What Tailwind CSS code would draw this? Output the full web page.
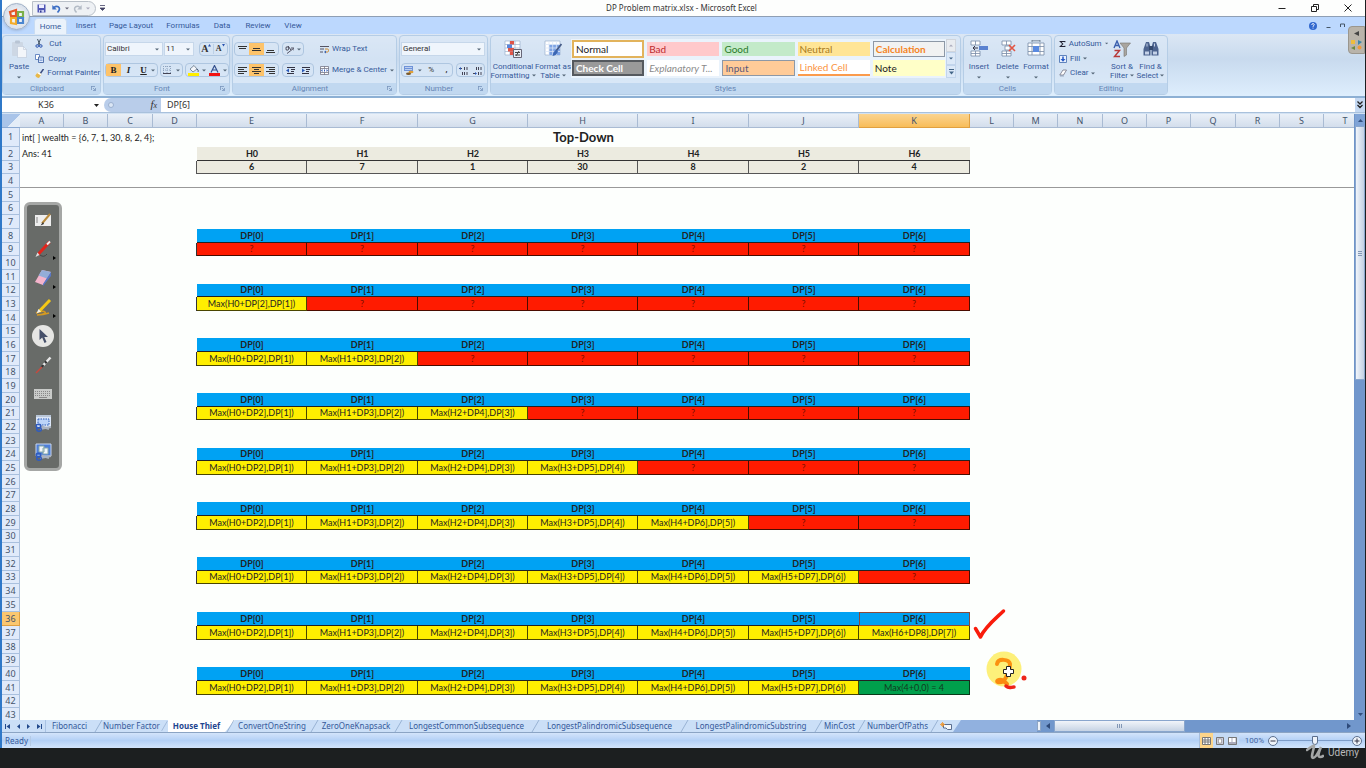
<!DOCTYPE html>
<html lang="en">
<head>
<meta charset="utf-8">
<title>DP Problem matrix.xlsx - Microsoft Excel</title>
<script src="https://cdn.jsdelivr.net/npm/@tailwindcss/browser@4"></script>
</head>
<body class="flex h-screen flex-col overflow-hidden bg-[#1c1f20] font-['Noto_Sans','Open_Sans',sans-serif] text-[8px] leading-[10px] text-[#35599a]">
<div class="relative mr-px flex min-h-0 flex-1 flex-col border-l-2 border-[#2f78c8] bg-[#fdfffd]">

  <!-- Title bar -->
  <header class="flex h-[17px] shrink-0 items-center border-b border-[#8f9fb4] bg-[#fdfefd]">
    <div class="ml-[30px] flex h-[15px] w-[64px] items-center gap-1 rounded-r-full border border-[#b9c0c8] bg-[#eef1f4] pl-1">
      <button aria-label="Save"><svg class="size-[9px]" viewBox="0 0 9 9"><path d="M.5.5h8v8h-8z" fill="#4f55b5"/><path d="M2 .5h5v3.500H2z" fill="#eef"/><path d="M2 6h5v2.500H2z" fill="#c9cdf0"/><path d="M3 6.500h1.500v2H3z" fill="#333a90"/></svg></button>
      <button class="ml-0.5 flex items-center gap-1" aria-label="Undo"><svg class="h-[9px] w-[9px]" viewBox="0 0 9 9"><path d="M2 3.500C5 1 8.500 3 7 6.500L5.500 8.500" fill="none" stroke="#3d6fc4" stroke-width="1.700"/><path d="M.3 1v4.500h4.500z" fill="#3d6fc4"/></svg><svg class="h-[3px] w-1" viewBox="0 0 4 3"><path d="M0 .5h4L2 2.500z" fill="#667"/></svg></button>
      <button class="flex items-center gap-1" aria-label="Redo"><svg class="h-[9px] w-[9px]" viewBox="0 0 9 9"><path d="M7 3.500C4 1 .5 3 2 6.500L3.500 8.500" fill="none" stroke="#b4bcc6" stroke-width="1.500"/><path d="M8.700 1v4.500H4.200z" fill="#b4bcc6"/></svg><svg class="h-[3px] w-1" viewBox="0 0 4 3"><path d="M0 .5h4L2 2.500z" fill="#aab"/></svg></button>
    </div>
    <button class="ml-1" aria-label="Customize toolbar"><svg class="h-[6px] w-[5px]" viewBox="0 0 5 6"><path d="M0 .5h5M0 3h5L2.500 5.500z" fill="#446" stroke="#446" stroke-width=".8"/></svg></button>
    <h1 class="flex-1 pr-[20px] text-center text-[#333]">DP Problem matrix.xlsx - Microsoft Excel</h1>
    <div class="flex items-center gap-[25px] pr-[13px]">
      <button aria-label="Minimize"><svg class="size-[8px]" viewBox="0 0 8 8"><path d="M.5 4.500h7" stroke="#222"/></svg></button>
      <button aria-label="Restore"><svg class="size-[8px]" viewBox="0 0 8 8"><path d="M.5 2.500h5v5h-5zM2.500 2.500v-2h5v5h-2" fill="none" stroke="#222"/></svg></button>
      <button aria-label="Close"><svg class="size-[8px]" viewBox="0 0 8 8"><path d="M.5.5l7 7M7.500.5l-7 7" stroke="#222"/></svg></button>
    </div>
  </header>

  <!-- Ribbon tabs -->
  <nav class="flex h-[17px] shrink-0 items-end bg-[#bcd8fe] pl-[32px] font-['Roboto',sans-serif]" aria-label="Ribbon tabs">
    <button class="h-4 w-[33px] rounded-t border border-b-0 border-[#c9dcf2] bg-[#eaf2fb]">Home</button>
    <button class="h-4 w-[38px]">Insert</button>
    <button class="h-4 w-[52px]">Page Layout</button>
    <button class="h-4 w-[52px]">Formulas</button>
    <button class="h-4 w-[26px]">Data</button>
    <button class="h-4 w-[46px]">Review</button>
    <button class="h-4 w-[24px]">View</button>
    <div class="ml-auto flex h-full items-center gap-[9px] pr-[20px]">
      <button aria-label="Help"><svg class="size-[8px]" viewBox="0 0 8 8"><circle cx="4" cy="4" r="4" fill="#3168cf"/><path d="M2.800 3c0-2 2.600-1.700 2.400-.2C5 3.700 4 3.700 4 4.800M4 5.700v.8" stroke="#fff" fill="none"/></svg></button>
      <button aria-label="Minimize workbook"><svg class="h-[6px] w-[5px]" viewBox="0 0 5 6"><path d="M.5 4.500h4" stroke="#456"/></svg></button>
      <button aria-label="Restore workbook"><svg class="size-[5px]" viewBox="0 0 5 5"><path d="M.5 4V1h4v3" stroke="#456" fill="none"/></svg></button>
    </div>
  </nav>

  <!-- Ribbon -->
  <section class="flex h-[64px] shrink-0 gap-0.5 border-b-2 border-[#8db0d4] bg-linear-to-b from-[#dce7f4] via-[#c8daee] via-40% to-[#deeefd] pt-px pb-px font-['Roboto',sans-serif]">
    <div class="flex w-[99px] flex-col rounded-sm border border-[#b5cde6] bg-[#dbe8f6]/60">
      <div class="flex flex-1 gap-1.5 pl-1.5">
        <button class="flex w-[21px] flex-col items-center pt-1"><svg class="h-[18px] w-4" viewBox="0 0 16 18"><rect x="1" y="2" width="11" height="14" rx="1" fill="#cdd7e4"/><rect x="4" y=".5" width="5" height="3" rx="1" fill="#b8c4d4"/><path d="M6.500 6.500h6l3 3v8h-9z" fill="#f3f6fa" stroke="#bcc8d8" stroke-width=".6"/><path d="M12.500 6.500v3h3" fill="none" stroke="#bcc8d8" stroke-width=".6"/></svg><span class="mt-1">Paste</span><svg class="mt-1 h-[3px] w-1" viewBox="0 0 4 3"><path d="M0 .5h4L2 2.500z" fill="#567"/></svg></button>
        <div class="flex flex-col">
          <button class="flex h-[15px] items-center gap-1.5"><svg class="h-[9px] w-[8px]" viewBox="0 0 8 9"><path d="M2.500 0L5 6M5.500 0L3 6" stroke="#456" fill="none"/><circle cx="2.200" cy="7" r="1.300" fill="none" stroke="#2c55b0"/><circle cx="5.800" cy="7" r="1.300" fill="none" stroke="#2c55b0"/></svg>Cut</button>
          <button class="flex h-[15px] items-center gap-1"><svg class="size-[9px]" viewBox="0 0 9 9"><path d="M.5.5h4v5h-4z" fill="#fff" stroke="#4a72b8" stroke-width=".8"/><path d="M3.500 3h5v5.500h-5z" fill="#dfe9fb" stroke="#34599e" stroke-width=".8"/><path d="M4.500 5h3M4.500 6.500h3" stroke="#5580c8" stroke-width=".6"/></svg>Copy</button>
          <button class="flex h-[14px] items-center gap-[3px] whitespace-nowrap"><svg class="size-[9px]" viewBox="0 0 9 9"><path d="M8.500 0L5 5" stroke="#3a4c80" stroke-width="1.500"/><path d="M3 3l3.500 2L4 9C2 9 1 8 .3 6.500z" fill="#e8b848"/><path d="M3 3l3.500 2-1 1.200L2 4z" fill="#fff"/></svg>Format Painter</button>
        </div>
      </div>
      <div class="flex h-[11px] items-center bg-[#c1d8f0] text-[#6686b5]"><span class="flex-1 text-center">Clipboard</span><svg class="mr-1 size-[5px]" viewBox="0 0 5 5"><path d="M0 .5h4M.5 0v4M2 2l2.500 2.500M4.500 2v2.500H2" stroke="#7a95bd" fill="none" stroke-width=".8"/></svg></div>
    </div>

    <div class="flex w-[127px] flex-col rounded-sm border border-[#b5cde6] bg-[#dbe8f6]/60">
      <div class="flex flex-1 flex-col gap-[7px] pt-1.5 pl-px">
        <div class="flex h-[14px] items-center gap-px text-[#333]">
          <label class="relative flex h-full w-[58px] items-center bg-[#eff5fc]"><select aria-label="Font" class="size-full appearance-none border border-[#c6d7ea] pl-px"><option>Calibri</option></select><svg class="pointer-events-none absolute right-1 h-[3px] w-1" viewBox="0 0 4 3"><path d="M0 .5h4L2 2.500z" fill="#567"/></svg></label>
          <label class="relative flex h-full w-[30px] items-center bg-[#eff5fc]"><select aria-label="Font size" class="size-full appearance-none border border-[#c6d7ea] pl-px"><option>11</option></select><svg class="pointer-events-none absolute right-1 h-[3px] w-1" viewBox="0 0 4 3"><path d="M0 .5h4L2 2.500z" fill="#567"/></svg></label>
          <div class="ml-1 flex h-full w-[29px] items-center rounded-sm border border-[#aec6e0] font-['Liberation_Serif',serif] font-bold">
            <button class="flex w-1/2 justify-center border-r border-[#bcd0e6] text-[10px]" aria-label="Grow font">A<svg class="size-[3px]" viewBox="0 0 3 3"><path d="M0 2.500h3L1.500 0z" fill="#2a55b0"/></svg></button>
            <button class="flex w-1/2 justify-center text-[8px]" aria-label="Shrink font">A<svg class="size-[3px]" viewBox="0 0 3 3"><path d="M0 0h3L1.500 2.500z" fill="#2a55b0"/></svg></button>
          </div>
        </div>
        <div class="flex h-[14px] gap-0.5 font-['Liberation_Serif',serif] text-[9px] font-bold text-[#222]">
          <div class="flex w-[53px] items-center rounded-sm border border-[#aec6e0]">
            <button class="h-full w-[15px] bg-[#fdc36a]">B</button><button class="h-full w-[15px] italic">I</button><button class="h-full w-[15px] underline">U</button><svg class="h-[3px] w-1" viewBox="0 0 4 3"><path d="M0 .5h4L2 2.500z" fill="#567"/></svg>
          </div>
          <button class="flex w-[23px] items-center justify-around rounded-sm border border-[#aec6e0]" aria-label="Borders"><svg class="size-[8px]" viewBox="0 0 8 8"><path d="M.5 0v8M4 0v8M7.500 0v8M0 .5h8M0 4h8" stroke="#8ea3be" stroke-dasharray="1 1"/><path d="M0 7.500h8" stroke="#445"/></svg><svg class="h-[3px] w-1" viewBox="0 0 4 3"><path d="M0 .5h4L2 2.500z" fill="#567"/></svg></button>
          <div class="flex w-[44px] items-center justify-around rounded-sm border border-[#aec6e0]">
            <button aria-label="Fill color"><svg class="h-[11px] w-[11px]" viewBox="0 0 11 11"><path d="M2 4l4-3.500L9 4 5 7z" fill="#f5f7fb" stroke="#567" stroke-width=".7"/><path d="M9 4c2 1 1 3 1 3" stroke="#457" fill="none"/><path d="M0 8h11v3H0z" fill="#ffee00"/></svg></button><svg class="h-[3px] w-1" viewBox="0 0 4 3"><path d="M0 .5h4L2 2.500z" fill="#567"/></svg>
            <button aria-label="Font color"><svg class="h-[11px] w-[11px]" viewBox="0 0 11 11"><path d="M2 7.500L5.500.5 9 7.500M3.500 5h4" stroke="#34508e" stroke-width="1.200" fill="none"/><path d="M0 8h11v3H0z" fill="#f21313"/></svg></button><svg class="h-[3px] w-1" viewBox="0 0 4 3"><path d="M0 .5h4L2 2.500z" fill="#567"/></svg>
          </div>
        </div>
      </div>
      <div class="flex h-[11px] items-center bg-[#c1d8f0] text-[#6686b5]"><span class="flex-1 text-center">Font</span><svg class="mr-1 size-[5px]" viewBox="0 0 5 5"><path d="M0 .5h4M.5 0v4M2 2l2.500 2.500M4.500 2v2.500H2" stroke="#7a95bd" fill="none" stroke-width=".8"/></svg></div>
    </div>

    <div class="flex w-[165px] flex-col rounded-sm border border-[#b5cde6] bg-[#dbe8f6]/60">
      <div class="flex flex-1 flex-col gap-[7px] pt-1.5 pl-px">
        <div class="flex h-[14px] items-center">
          <div class="flex h-full w-[45px] items-center rounded-sm border border-[#aec6e0]">
            <button class="flex h-full flex-1 items-center justify-center" aria-label="Top align"><svg class="size-[9px]" viewBox="0 0 9 9"><path d="M0 1.500h9M1 3.500h7" stroke="#333"/></svg></button>
            <button class="flex h-full flex-1 items-center justify-center bg-[#fdc36a]" aria-label="Middle align"><svg class="size-[9px]" viewBox="0 0 9 9"><path d="M1 3.500h7M0 5.500h9" stroke="#333"/></svg></button>
            <button class="flex h-full flex-1 items-center justify-center" aria-label="Bottom align"><svg class="size-[9px]" viewBox="0 0 9 9"><path d="M1 5.500h7M0 7.500h9" stroke="#333"/></svg></button>
          </div>
          <button class="ml-[3px] flex h-full w-[22px] items-center justify-around rounded-sm border border-[#aec6e0]" aria-label="Orientation"><svg class="size-[9px]" viewBox="0 0 9 9"><path d="M2 8.500l6.500-5M6 3h3v2.500" stroke="#556" fill="none"/><path d="M1 3.500a1.300 1.300 0 1 0 2.500 0a1.300 1.300 0 1 0-2.500 0M3 1l3 4" stroke="#445" fill="none"/></svg><svg class="h-[3px] w-1" viewBox="0 0 4 3"><path d="M0 .5h4L2 2.500z" fill="#567"/></svg></button>
          <button class="ml-4 flex items-center gap-[3px] whitespace-nowrap"><svg class="size-[9px]" viewBox="0 0 9 9"><path d="M0 1.500h9M0 4h4M0 7h3" stroke="#556"/><path d="M5 4h2.500q1 0 1 1.500T7.500 7H5" stroke="#d08a2c" fill="none"/><path d="M6 5.500L4 7l2 1.500z" fill="#3a62b0"/></svg>Wrap Text</button>
        </div>
        <div class="flex h-[14px] items-center">
          <div class="flex h-full w-[45px] items-center rounded-sm border border-[#aec6e0]">
            <button class="flex h-full flex-1 items-center justify-center" aria-label="Align left"><svg class="size-[9px]" viewBox="0 0 9 9"><path d="M0 1.500h9M0 3.500h6M0 5.500h9M0 7.500h6" stroke="#333"/></svg></button>
            <button class="flex h-full flex-1 items-center justify-center bg-[#fdc36a]" aria-label="Center"><svg class="size-[9px]" viewBox="0 0 9 9"><path d="M0 1.500h9M2 3.500h5M0 5.500h9M2 7.500h5" stroke="#333"/></svg></button>
            <button class="flex h-full flex-1 items-center justify-center" aria-label="Align right"><svg class="size-[9px]" viewBox="0 0 9 9"><path d="M0 1.500h9M3 3.500h6M0 5.500h9M3 7.500h6" stroke="#333"/></svg></button>
          </div>
          <div class="ml-[3px] flex h-full w-[32px] items-center justify-around rounded-sm border border-[#aec6e0]">
            <button aria-label="Decrease indent"><svg class="size-[9px]" viewBox="0 0 9 9"><path d="M1 1.500h8M5 3.500h4M5 5.500h3M1 7.500h7" stroke="#334"/><path d="M0 4.500L3 2.500v4z" fill="#2c5ab8"/></svg></button>
            <button aria-label="Increase indent"><svg class="size-[9px]" viewBox="0 0 9 9"><path d="M1 1.500h8M5 3.500h4M5 5.500h3M1 7.500h7" stroke="#334"/><path d="M4 4.500L1 2.500v4z" fill="#2c5ab8"/></svg></button>
          </div>
          <button class="ml-1.5 flex items-center gap-[3px] whitespace-nowrap"><svg class="size-[9px]" viewBox="0 0 9 9"><path d="M.5.5h8v8h-8zM.5 2.500h8M.5 6.500h8M4.500.5v2M4.500 6.500v2" stroke="#667" stroke-width=".7" fill="#fff"/><path d="M1 4.500l1.500-1.500v3zM8 4.500L6.500 3v3zM4 3.500h1v2H4z" fill="#2c5ab8"/></svg>Merge &amp; Center<svg class="h-[3px] w-1" viewBox="0 0 4 3"><path d="M0 .5h4L2 2.500z" fill="#567"/></svg></button>
        </div>
      </div>
      <div class="flex h-[11px] items-center bg-[#c1d8f0] text-[#6686b5]"><span class="flex-1 text-center">Alignment</span><svg class="mr-1 size-[5px]" viewBox="0 0 5 5"><path d="M0 .5h4M.5 0v4M2 2l2.500 2.500M4.500 2v2.500H2" stroke="#7a95bd" fill="none" stroke-width=".8"/></svg></div>
    </div>

    <div class="flex w-[89px] flex-col rounded-sm border border-[#b5cde6] bg-[#dbe8f6]/60">
      <div class="flex flex-1 flex-col gap-[7px] pt-1.5 pl-px">
        <label class="relative flex h-[14px] w-[84px] items-center bg-[#eff5fc] text-[#333]"><select aria-label="Number format" class="size-full appearance-none border border-[#c6d7ea] pl-px"><option>General</option></select><svg class="pointer-events-none absolute right-1 h-[3px] w-1" viewBox="0 0 4 3"><path d="M0 .5h4L2 2.500z" fill="#567"/></svg></label>
        <div class="flex h-[14px] gap-[3px] text-[#333]">
          <div class="flex w-[52px] items-center gap-1 rounded-sm border border-[#aec6e0] pl-0.5">
            <button aria-label="Accounting format"><svg class="size-[10px]" viewBox="0 0 10 10"><rect y="1" width="9" height="5" fill="#6f93d8"/><path d="M1 2.500h7M1 4.500h7" stroke="#dfe9fb" stroke-width=".7"/><ellipse cx="7" cy="7" rx="2.500" ry="1.200" fill="#e0a13a"/><ellipse cx="4.500" cy="8.700" rx="2.500" ry="1.200" fill="#7c5a2c"/></svg></button>
            <svg class="h-[3px] w-1" viewBox="0 0 4 3"><path d="M0 .5h4L2 2.500z" fill="#567"/></svg>
            <button class="w-3">%</button><button class="w-3 font-bold">,</button>
          </div>
          <div class="flex w-[29px] items-center justify-around rounded-sm border border-[#aec6e0]">
            <button aria-label="Increase decimal"><svg class="size-[9px]" viewBox="0 0 9 9"><path d="M0 2.500h3M5.500 1v3M8 1v3M3.500 6v3M5.500 6v3M8 6v3" stroke="#445"/><path d="M0 2.500L2 1v3z" fill="#2c5ab8"/></svg></button>
            <button aria-label="Decrease decimal"><svg class="size-[9px]" viewBox="0 0 9 9"><path d="M0 7.500h3M5.500 1v3M8 1v3M3.500 1v3M5.500 6v3M8 6v3" stroke="#445"/><path d="M4 7.500L2 6v3z" fill="#2c5ab8"/></svg></button>
          </div>
        </div>
      </div>
      <div class="flex h-[11px] items-center bg-[#c1d8f0] text-[#6686b5]"><span class="flex-1 text-center">Number</span><svg class="mr-1 size-[5px]" viewBox="0 0 5 5"><path d="M0 .5h4M.5 0v4M2 2l2.500 2.500M4.500 2v2.500H2" stroke="#7a95bd" fill="none" stroke-width=".8"/></svg></div>
    </div>

    <div class="flex w-[471px] flex-col rounded-sm border border-[#b5cde6] bg-[#dbe8f6]/60">
      <div class="flex min-h-0 flex-1">
        <button class="flex w-[44px] flex-col items-center pt-1"><svg class="size-[18px]" viewBox="0 0 18 18"><path d="M1 1h15v14H1z" fill="#fff" stroke="#9cb0cc" stroke-width=".7"/><path d="M1 4.500h15M1 8h15M1 11.500h15M6 1v14M11 1v14" stroke="#9cb0cc" stroke-width=".7"/><path d="M6 1h4v3.500H6zM4 8h6v3.500H4z" fill="#e05548"/><path d="M3 4.500h5V8H3z" fill="#5b84d8"/><path d="M6 11.500h3V15H6z" fill="#e05548"/><path d="M9.500 9.500h8v8h-8z" fill="#e9eef6" stroke="#667"/><path d="M11 12.500h5M11 15h5M15 11l-3 5" stroke="#444"/></svg><span class="mt-1 leading-[9px] whitespace-nowrap">Conditional<br>Formatting<svg class="ml-0.5 inline h-[3px] w-1" viewBox="0 0 4 3"><path d="M0 .5h4L2 2.500z" fill="#567"/></svg></span></button>
        <button class="flex w-[36px] flex-col items-center pt-1"><svg class="size-[18px]" viewBox="0 0 18 18"><path d="M1 1h15v14H1z" fill="#fff" stroke="#9cb0cc" stroke-width=".7"/><path d="M5 4.500h11V15H5z" fill="#7fa4e4"/><path d="M1 4.500h15M1 8h15M1 11.500h15M5 1v14M8.700 1v14M12.400 1v14" stroke="#dbe6f6" stroke-width=".8"/><path d="M17.500 4L12 11" stroke="#445a86" stroke-width="1.800"/><path d="M12.500 10q-3 .5-4 6 4-.5 5.500-4.500z" fill="#3b66b4"/></svg><span class="mt-1 leading-[9px] whitespace-nowrap">Format as<br>Table<svg class="ml-0.5 inline h-[3px] w-1" viewBox="0 0 4 3"><path d="M0 .5h4L2 2.500z" fill="#567"/></svg></span></button>
        <div class="mt-[3px] grid h-[39px] w-[375px] grid-cols-5 grid-rows-2 gap-x-[3px] gap-y-px bg-[#eaf3fc] p-px font-['Lato',sans-serif] text-[10px] leading-[12px]">
          <button class="border-2 border-[#e2b35c] bg-white pl-0.5 text-left text-[#222]">Normal</button>
          <button class="my-0.5 bg-[#ffc9cb] pl-0.5 text-left text-[#bb2a2c]">Bad</button>
          <button class="my-0.5 bg-[#c3eac9] pl-0.5 text-left text-[#2a7a2a]">Good</button>
          <button class="my-0.5 bg-[#ffe596] pl-0.5 text-left text-[#a87a1c]">Neutral</button>
          <button class="my-px border border-[#8d98a6] bg-[#f1f2f2] pl-0.5 text-left font-bold text-[#f5841f]">Calculation</button>
          <button class="my-px border-2 border-double border-[#55595e] bg-[#9a9a9a] pl-0.5 text-left font-bold text-white">Check Cell</button>
          <button class="my-px bg-white pl-0.5 text-left whitespace-nowrap text-[#8a8a8a] italic">Explanatory T...</button>
          <button class="my-px border border-[#8d98a6] bg-[#ffcb98] pl-0.5 text-left text-[#5a5878]">Input</button>
          <button class="my-px border-b-2 border-[#fb9b4c] bg-white pl-0.5 text-left text-[#fb9440]">Linked Cell</button>
          <button class="my-px bg-[#ffffc8] pl-0.5 text-left text-[#222]">Note</button>
        </div>
        <div class="mt-[3px] flex h-[39px] w-[10px] flex-col">
          <button class="flex flex-1 items-center justify-center border border-[#d0d5dc] bg-[#e9ecf0]" aria-label="Previous styles"><svg class="h-[3px] w-1" viewBox="0 0 4 3"><path d="M0 2.500h4L2 .5z" fill="#aab"/></svg></button>
          <button class="flex flex-1 items-center justify-center border border-[#c2d5ec] bg-[#dce9f8]" aria-label="Next styles"><svg class="h-[3px] w-1" viewBox="0 0 4 3"><path d="M0 .5h4L2 2.500z" fill="#468"/></svg></button>
          <button class="flex flex-1 items-center justify-center border border-[#c2d5ec] bg-[#dce9f8]" aria-label="More styles"><svg class="h-[6px] w-[5px]" viewBox="0 0 5 6"><path d="M0 .5h5" stroke="#468"/><path d="M0 2.500h5L2.500 5.500z" fill="#468"/></svg></button>
        </div>
      </div>
      <div class="flex h-[11px] items-center justify-center bg-[#c1d8f0] text-[#6686b5]">Styles</div>
    </div>

    <div class="flex w-[89px] flex-col rounded-sm border border-[#b5cde6] bg-[#dbe8f6]/60">
      <div class="flex flex-1 pl-px">
        <button class="flex w-[28px] flex-col items-center pt-1"><svg class="size-[18px]" viewBox="0 0 18 18"><path d="M1 1h9v4H1zM1 11h9v5H1z" fill="#fff" stroke="#778aa6" stroke-width=".8"/><path d="M5.500 1v4M5.500 11v5M1 13.500h9" stroke="#778aa6" stroke-width=".8"/><path d="M9 6h9v4H9z" fill="#5a82d0"/><path d="M8 8H3M5 6L3 8l2 2" stroke="#334" fill="none"/></svg><span class="mt-1">Insert</span><svg class="mt-1 h-[3px] w-1" viewBox="0 0 4 3"><path d="M0 .5h4L2 2.500z" fill="#567"/></svg></button>
        <button class="flex w-[29px] flex-col items-center pt-1"><svg class="size-[18px]" viewBox="0 0 18 18"><path d="M3 1h9v4H3zM3 11h9v5H3zM6 6h5v4H6z" fill="#fff" stroke="#778aa6" stroke-width=".8"/><path d="M7.500 1v4M7.500 11v5M3 13.500h9" stroke="#778aa6" stroke-width=".8"/><path d="M10 5l6 6M16 5l-6 6" stroke="#e25544" stroke-width="1.600"/></svg><span class="mt-1">Delete</span><svg class="mt-1 h-[3px] w-1" viewBox="0 0 4 3"><path d="M0 .5h4L2 2.500z" fill="#567"/></svg></button>
        <button class="flex w-[28px] flex-col items-center pt-1"><svg class="size-[18px]" viewBox="0 0 18 18"><path d="M1 3h16v12H1z" fill="#fff" stroke="#778aa6" stroke-width=".8"/><path d="M1 6.500h16M1 11.500h16M5 3v12M13 3v12" stroke="#778aa6" stroke-width=".8"/><path d="M6 6h6v6H6z" fill="#5a8ae0"/><path d="M5 .8h8M5 0v2M13 0v2" stroke="#567" stroke-width=".7"/></svg><span class="mt-1">Format</span><svg class="mt-1 h-[3px] w-1" viewBox="0 0 4 3"><path d="M0 .5h4L2 2.500z" fill="#567"/></svg></button>
      </div>
      <div class="flex h-[11px] items-center justify-center bg-[#c1d8f0] text-[#6686b5]">Cells</div>
    </div>

    <div class="flex w-[114px] flex-col rounded-sm border border-[#b5cde6] bg-[#dbe8f6]/60">
      <div class="flex flex-1 pl-1">
        <div class="flex w-[49px] flex-col whitespace-nowrap">
          <button class="flex h-[15px] items-center gap-[3px]"><svg class="size-[8px]" viewBox="0 0 8 8"><path d="M7 2V1H1.500L4.500 4 1.500 7H7V6" stroke="#223" stroke-width="1.200" fill="none"/></svg>AutoSum<svg class="h-[3px] w-1" viewBox="0 0 4 3"><path d="M0 .5h4L2 2.500z" fill="#567"/></svg></button>
          <button class="flex h-[15px] items-center gap-[3px]"><svg class="size-[8px]" viewBox="0 0 8 8"><path d="M.5.5h7v7h-7z" fill="#e8f0fc" stroke="#5f83bd"/><path d="M4 1.500v3" stroke="#2358c8" stroke-width="1.500"/><path d="M1.500 4h5L4 6.800z" fill="#2358c8"/></svg>Fill<svg class="h-[3px] w-1" viewBox="0 0 4 3"><path d="M0 .5h4L2 2.500z" fill="#567"/></svg></button>
          <button class="flex h-[14px] items-center gap-[3px]"><svg class="size-[8px]" viewBox="0 0 8 8"><path d="M4 1h3.500L4.500 6H.8z" fill="#fff" stroke="#667" stroke-width=".7"/><path d="M.8 6h3.700l.5 1.500H1z" fill="#9aa8bd"/></svg>Clear<svg class="h-[3px] w-1" viewBox="0 0 4 3"><path d="M0 .5h4L2 2.500z" fill="#567"/></svg></button>
        </div>
        <button class="flex w-[28px] flex-col items-center pt-1"><svg class="size-[18px]" viewBox="0 0 18 18"><path d="M1 8L4 1l3 7M2.200 5.500h3.600" stroke="#3b5fae" stroke-width="1.400" fill="none"/><path d="M1.500 10.500H6.500L1.500 16.500H7" stroke="#b83a3a" stroke-width="1.500" fill="none"/><path d="M7 3h10.500l-4 5v7l-2.500 1.500V8z" fill="#a9a59f" stroke="#76736e" stroke-width=".6"/></svg><span class="mt-1 leading-[9px] whitespace-nowrap">Sort &amp;<br>Filter<svg class="ml-0.5 inline h-[3px] w-1" viewBox="0 0 4 3"><path d="M0 .5h4L2 2.500z" fill="#567"/></svg></span></button>
        <button class="flex w-[29px] flex-col items-center pt-1"><svg class="size-[18px]" viewBox="0 0 18 18"><path d="M4 2h3l1.500 5v8.500H1.500V9zM14 2h-3L9.500 7v8.500h7V9z" fill="#4d648f"/><path d="M7 6h4v4H7z" fill="#34496e"/><path d="M3 11.500h4v3H3zM11 11.500h4v3h-4zM4.500 3.500h1v3h-1zM12 3.500h1v3h-1z" fill="#c5d2e8"/></svg><span class="mt-1 leading-[9px] whitespace-nowrap">Find &amp;<br>Select<svg class="ml-0.5 inline h-[3px] w-1" viewBox="0 0 4 3"><path d="M0 .5h4L2 2.500z" fill="#567"/></svg></span></button>
      </div>
      <div class="flex h-[11px] items-center justify-center bg-[#c1d8f0] text-[#6686b5]">Editing</div>
    </div>
  </section>

  <!-- Formula bar -->
  <div class="flex h-[15px] shrink-0 items-stretch border-b border-[#a9c1dc] bg-white text-[9px] text-[#333]">
    <div class="flex w-[102px] items-center"><input aria-label="Name box" value="K36" class="min-w-0 flex-1 pr-1 text-center"><svg class="mr-[5px] h-[3px] w-[5px]" viewBox="0 0 5 3"><path d="M0 0h5L2.500 3z" fill="#222"/></svg></div>
    <div class="flex w-[57px] items-center justify-between rounded-l-full bg-[#b9cdea] pr-1 pl-1"><span class="size-[6px] rounded-full border border-[#9bb0cf] bg-[#dbe6f5]"></span><button class="font-['Liberation_Serif',serif] text-[11px] italic" aria-label="Insert function">f<span class="text-[8px]">x</span></button></div>
    <input aria-label="Formula" value="DP[6]" class="min-w-0 flex-1 pl-1.5">
    <button class="flex w-[10px] items-center justify-center bg-[#c4d8f2]" aria-label="Expand formula bar"><svg class="h-[8px] w-[6px]" viewBox="0 0 6 8"><path d="M.5.5L3 3 5.500.5M.5 4L3 6.500 5.500 4" stroke="#222" stroke-width="1.300" fill="none"/></svg></button>
  </div>

  <!-- Worksheet -->
  <main class="relative flex min-h-0 flex-1 border-t border-[#d3e2f3]">
    <div class="min-w-0 flex-1 overflow-hidden">
      <table class="w-full table-fixed border-separate border-spacing-0 font-['Lato',sans-serif] text-[9px] leading-[12px] text-[#222]">
        <colgroup id="cols"></colgroup>
        <thead><tr id="letters" class="h-[14px]"></tr></thead>
        <tbody id="rows"></tbody>
      </table>
    </div>
    <div class="flex w-[11px] flex-col border-l border-[#6f95c9] bg-[#7197cc]" role="scrollbar" aria-controls="rows" aria-valuenow="0" aria-label="Vertical scroll">
      <span class="flex h-[12px] items-center justify-center bg-[#7fa3d6]"><svg class="h-[3px] w-[5px]" viewBox="0 0 5 3"><path d="M0 3h5L2.500 0z" fill="#33507e"/></svg></span>
      <span class="flex h-[254px] items-center justify-center border border-[#89a6cd] bg-linear-to-r from-[#f1f5fa] to-[#c3d1e4]"><svg class="h-[5px] w-[4px]" viewBox="0 0 4 5"><path d="M0 .5h4M0 2.500h4M0 4.500h4" stroke="#8297b5"/></svg></span>
      <span class="mt-auto flex h-[12px] items-center justify-center"><svg class="h-[3px] w-[5px]" viewBox="0 0 5 3"><path d="M0 0h5L2.500 3z" fill="#33507e"/></svg></span>
    </div>

    <!-- Pen strokes drawn over the sheet -->
    <svg class="absolute top-[491px] left-[965px] h-[90px] w-[70px]" viewBox="0 0 70 90" aria-hidden="true">
      <circle cx="37" cy="64" r="17.500" fill="#fdf07a"/>
      <path d="M8.500 23.500l5 8.500C18 22 27 15 36.500 6" fill="none" stroke="#f91c0c" stroke-width="3.500" stroke-linecap="round" stroke-linejoin="round"/>
      <path d="M30 59c1-6 12-5 13 0 0 6-1 9-5 15" fill="none" stroke="#fb9110" stroke-width="4" stroke-linecap="round"/>
      <path d="M37 76c-6 3-9 0-5-1 4-1 6 2 8 4" fill="none" stroke="#fb8a10" stroke-width="4" stroke-linecap="round"/>
      <path d="M39 81c3 3 5 1 8 1" fill="none" stroke="#ee2418" stroke-width="3.500" stroke-linecap="round"/>
      <circle cx="57" cy="73" r="2.500" fill="#ee2418"/>
      <path d="M39.500 61.500h4v3h3v4h-3v3h-4v-3h-3v-4h3z" fill="#fff" stroke="#222"/>
    </svg>

    <!-- Annotation palette -->
    <aside class="absolute top-[88px] left-[22px] flex h-[269px] w-[38px] flex-col items-center gap-[7px] rounded-md border-[3px] border-[#a5a7a5] bg-[#686b68] pt-1" aria-label="Drawing tools">
      <button class="flex size-[22px] items-center justify-center" aria-label="Whiteboard"><svg class="size-[18px]" viewBox="0 0 18 18"><rect x="1" y="4" width="16" height="11" fill="#eee"/><path d="M3 6v6" stroke="#888"/><path d="M16 3L8 12.500" stroke="#b98a3c" stroke-width="2"/><path d="M9 11l-2.500 3.500L10 13z" fill="#333"/></svg></button>
      <button class="relative flex size-[22px] items-center justify-center" aria-label="Pen"><svg class="size-[18px]" viewBox="0 0 18 18"><path d="M6 15q4 3 7-1" stroke="#444" fill="none"/><path d="M15.500 2L4 14.500" stroke="#e3241b" stroke-width="3"/><path d="M16 1.500l-3 3" stroke="#eee" stroke-width="2"/><path d="M3.500 12.500L1.500 17l4-2z" fill="#ddd"/></svg><svg class="absolute -right-0.5 bottom-0 h-1 w-[3px]" viewBox="0 0 3 4"><path d="M0 0v4l3-2z"/></svg></button>
      <button class="relative flex size-[22px] items-center justify-center" aria-label="Eraser"><svg class="size-[18px]" viewBox="0 0 18 18"><path d="M8 1l9 2-8 13-8-3z" fill="#f5b4cc"/><path d="M8 1l9 2-4 6.500-8.500-3z" fill="#93add8"/><path d="M17 3v4l-8 10v-2z" fill="#5877c8"/></svg><svg class="absolute -right-0.5 bottom-0 h-1 w-[3px]" viewBox="0 0 3 4"><path d="M0 0v4l3-2z"/></svg></button>
      <button class="relative flex size-[22px] items-center justify-center" aria-label="Highlighter"><svg class="size-[18px]" viewBox="0 0 18 18"><path d="M2 15q7-3 9-1t-8 3q6 0 12-2" stroke="#d69a20" fill="none" stroke-width="1.500"/><path d="M16 2L5 13.500" stroke="#f6c915" stroke-width="3"/><path d="M4.500 11l-2 4.500L7 13.500z" fill="#eee"/></svg><svg class="absolute -right-0.5 bottom-0 h-1 w-[3px]" viewBox="0 0 3 4"><path d="M0 0v4l3-2z"/></svg></button>
      <button class="flex size-[22px] items-center justify-center rounded-full bg-[#e6e6e4]" aria-label="Pointer"><svg class="size-4" viewBox="0 0 16 16"><path d="M4.500 1v11l2.700-2.500 2.300 5.500 2-1-2.200-5H13z" fill="#46506a"/></svg></button>
      <button class="flex size-[22px] items-center justify-center" aria-label="Laser"><svg class="size-[18px]" viewBox="0 0 18 18"><path d="M16.500 1.500L9 9.500" stroke="#e8e8e8" stroke-width="2.500"/><path d="M12.500 5.500L11 7" stroke="#333" stroke-width="2.500"/><path d="M9.500 9L7.500 11" stroke="#333" stroke-width="2"/><path d="M8 11l-6 6" stroke="#c8483c" stroke-width="1.500"/></svg></button>
      <button class="flex size-[22px] items-center justify-center" aria-label="Keyboard"><svg class="h-[10px] w-[18px]" viewBox="0 0 18 10"><path d="M0 0h18v10H0z" fill="#c9cbc9"/><path d="M1 2.500h16M1 4.500h16M1 6.500h16" stroke="#888" stroke-dasharray="1 1"/><path d="M5 8.500h8" stroke="#888"/></svg></button>
      <button class="flex size-[22px] items-center justify-center" aria-label="Capture region"><svg class="size-[18px]" viewBox="0 0 18 18"><path d="M2 1h15v12H2z" fill="#dbe6f7"/><path d="M2 1h15v2H2z" fill="#b9c6d8"/><path d="M4 5h11v6H4z" fill="#bcd4f8" stroke="#2c5cb8" stroke-dasharray="1.500 1"/><path d="M6 12l9 3M6 15l11-2" stroke="#a9b2c0" stroke-width="2"/><ellipse cx="4.500" cy="12" rx="2.300" ry="1.700" fill="none" stroke="#2f5cc0" stroke-width="1.500"/><ellipse cx="5" cy="15.500" rx="2.300" ry="1.700" fill="none" stroke="#2f5cc0" stroke-width="1.500"/></svg></button>
      <button class="flex size-[22px] items-center justify-center" aria-label="Capture screen"><svg class="size-[18px]" viewBox="0 0 18 18"><path d="M2 1h15v12H2z" fill="#4f7fd8" stroke="#c7d6ee"/><path d="M5 3h5v6H5zM9 5h5v6H9z" fill="#f1f5fb" stroke="#8aa"/><path d="M6 12l9 3M6 15l11-2" stroke="#a9b2c0" stroke-width="2"/><ellipse cx="4.500" cy="12" rx="2.300" ry="1.700" fill="none" stroke="#2f5cc0" stroke-width="1.500"/><ellipse cx="5" cy="15.500" rx="2.300" ry="1.700" fill="none" stroke="#2f5cc0" stroke-width="1.500"/></svg></button>
    </aside>
  </main>

  <!-- Sheet tabs -->
  <div class="flex h-[13px] shrink-0 items-stretch border-b border-[#8ba4c4] bg-[#91b1df]">
    <div class="flex w-[43px] items-center justify-around bg-[#cbdff7]">
      <button aria-label="First sheet"><svg class="size-[5px]" viewBox="0 0 5 5"><path d="M0 0h1v5H0zM5 0v5L1.500 2.500z" fill="#234a8c"/></svg></button>
      <button aria-label="Previous sheet"><svg class="size-[5px]" viewBox="0 0 5 5"><path d="M4 0v5L1 2.500z" fill="#234a8c"/></svg></button>
      <button aria-label="Next sheet"><svg class="size-[5px]" viewBox="0 0 5 5"><path d="M1 0v5l3-2.500z" fill="#234a8c"/></svg></button>
      <button aria-label="Last sheet"><svg class="size-[5px]" viewBox="0 0 5 5"><path d="M4 0h1v5H4zM0 0v5l3.500-2.500z" fill="#234a8c"/></svg></button>
    </div>
    <nav id="tabs" class="flex border-l border-[#a9c2e2] bg-[#cbdff7]" aria-label="Sheets"></nav>
    <button class="flex items-center bg-[#cbdff7]" aria-label="Insert sheet"><svg class="h-[9px] w-[14px]" viewBox="0 0 14 9"><path d="M4.500 2.500h8v5h-4l-1.500-1.500h-2.500z" fill="#f5f8fc" stroke="#5a6f90"/><path d="M3.500 0v5M1 2.500h5M2 1l3 3M5 1L2 4" stroke="#f0962c" stroke-width=".8"/></svg><svg class="h-3 w-[8px]" viewBox="0 0 8 12"><path d="M0 12L8 0v12z" fill="#91b1df"/></svg></button>
    <div class="ml-auto flex w-[328px] items-stretch bg-[#7197cc]" role="scrollbar" aria-controls="rows" aria-valuenow="0" aria-orientation="horizontal" aria-label="Horizontal scroll">
      <span class="my-px w-1 border border-[#8ea5c4] bg-[#eef3fa]"></span>
      <span class="flex w-[13px] items-center justify-center"><svg class="h-[6px] w-1" viewBox="0 0 4 6"><path d="M4 0v6L0 3z" fill="#2d4a7a"/></svg></span>
      <span class="flex w-[131px] items-center justify-center border border-[#89a6cd] bg-linear-to-b from-[#f1f5fa] to-[#c6d3e4]"><svg class="h-1 w-[5px]" viewBox="0 0 5 4"><path d="M.5 0v4M2.500 0v4M4.500 0v4" stroke="#8297b5"/></svg></span>
      <span class="mr-[11px] ml-auto flex w-[10px] items-center justify-center"><svg class="h-[6px] w-1" viewBox="0 0 4 6"><path d="M0 0v6l4-3z" fill="#2d4a7a"/></svg></span>
    </div>
  </div>

  <!-- Status bar -->
  <div class="flex h-[15px] shrink-0 items-center bg-linear-to-b from-[#d3e4fa] via-[#b3d0f6] to-[#d2e5fc] pl-[3px]">
    <span class="w-[26px] border-r border-[#b5cbe6]">Ready</span>
    <div class="ml-auto flex h-full items-center border-l border-[#a5bddd] bg-[#c5daf5]">
      <button class="flex h-full w-[13px] items-center justify-center bg-[#fdd58a]" aria-label="Normal view"><svg class="h-[8px] w-[9px]" viewBox="0 0 9 8"><path d="M.5.5h8v7h-8zM.5 3h8M.5 5h8M3 .5v7M6 .5v7" stroke="#777" fill="#fff"/></svg></button>
      <button class="flex h-full w-[13px] items-center justify-center" aria-label="Page layout view"><svg class="size-[8px]" viewBox="0 0 8 8"><path d="M.5.5h7v7h-7z" fill="#ccd" stroke="#777"/><path d="M2.500 2h3v4h-3z" fill="#fff" stroke="#888" stroke-width=".6"/></svg></button>
      <button class="flex h-full w-[13px] items-center justify-center" aria-label="Page break view"><svg class="h-[8px] w-[9px]" viewBox="0 0 9 8"><path d="M.5.5h8v7h-8z" fill="#aab" stroke="#777"/><path d="M1 1h2.500v4H1zM4.500 1h3v4h-3z" fill="#fff"/></svg></button>
    </div>
    <button class="w-[27px] pl-1 font-['Roboto',sans-serif] text-[#4565a0]">100%</button>
    <button class="ml-0.5" aria-label="Zoom out"><svg class="size-[10px]" viewBox="0 0 10 10"><circle cx="5" cy="5" r="4.500" fill="#eef3fa" stroke="#5b6f8e"/><path d="M2.500 5h5" stroke="#334"/></svg></button>
    <input type="range" aria-label="Zoom" min="10" max="190" value="100" class="h-[10px] w-[74px] appearance-none bg-transparent bg-[linear-gradient(#7d9cc8,#7d9cc8)] bg-size-[100%_1px] bg-center bg-no-repeat [&::-webkit-slider-thumb]:h-[9px] [&::-webkit-slider-thumb]:w-[6px] [&::-webkit-slider-thumb]:appearance-none [&::-webkit-slider-thumb]:rounded-b-full [&::-webkit-slider-thumb]:border [&::-webkit-slider-thumb]:border-[#5b6f8e] [&::-webkit-slider-thumb]:bg-[#eef3fa]">
    <button class="mr-[3px]" aria-label="Zoom in"><svg class="size-[10px]" viewBox="0 0 10 10"><circle cx="5" cy="5" r="4.500" fill="#eef3fa" stroke="#5b6f8e"/><path d="M2.500 5h5M5 2.500v5" stroke="#334"/></svg></button>
  </div>

  <!-- Office button -->
  <button class="absolute top-[3px] left-px size-[27px] rounded-full border border-[#9fb0c6] bg-radial from-white to-[#c8d3e2] shadow" aria-label="Office button"><svg class="mx-auto size-[18px]" viewBox="0 0 18 18"><g fill="none" stroke-width="2.200"><path d="M2 4l6-2v6H3z" stroke="#e6582a"/><path d="M10 4h5v5h-5z" stroke="#7bb04a"/><path d="M3 10h5v6l-5-1z" stroke="#f3ac2a"/><path d="M10 10h5v5h-5z" stroke="#4a86d0"/></g></svg></button>

  <!-- Docked recorder handle -->
  <div class="absolute top-[26px] right-0 flex h-[28px] w-[17px] flex-col items-center gap-1 rounded-l-sm border border-[#9a968e] bg-[#b9b4ab] pt-1">
    <svg class="h-[5px] w-[5px]" viewBox="0 0 5 5"><path d="M5 0v5L0 2.500z" fill="#444"/></svg>
    <svg class="h-[10px] w-[11px]" viewBox="0 0 11 10"><path d="M0 0h4v4H0z" fill="#eebd3c"/><path d="M7 0l4 2-4 3z" fill="#3d86a8"/><path d="M0 8l4-2v4z" fill="#6c8a3c"/><circle cx="8.500" cy="7.500" r="2" fill="#ee9a3c"/></svg>
  </div>
</div>

<footer class="flex h-[20px] shrink-0 items-start justify-end gap-1 pr-[7px] font-['Roboto',sans-serif] text-[10px] text-[#b9babb]">
  <svg class="relative -top-1 h-[16px] w-[18px]" viewBox="0 0 18 16"><path d="M1 6C4 4 7 1 8 1.500 9 2 4 14 7 14c3 0 6-7 8-11-2 5-4 10-1 10 1 0 2 0 3-1" fill="none" stroke="#a4a6a6" stroke-width="2.600" stroke-linecap="round"/></svg>
  <span>Udemy</span>
</footer>

<script>
  const letters = 'ABCDEFGHIJKLMNOPQRST'.split('');
  const widths = [44, 44, 45, 44, 110, 111, 110, 110, 111, 110, 111, 44, 44, 45, 44, 44, 45, 44, 44, 0];
  document.getElementById('cols').innerHTML = '<col style="width:18px">' +
    widths.map(w => w ? `<col style="width:${w}px">` : '<col>').join('');

  const head = "border-r border-b border-[#a9bbd3] p-0 text-center font-['Noto_Sans',sans-serif] text-[9px] font-normal text-[#44546c] bg-linear-to-b from-[#eaf0f8] to-[#d3deec]";
  const headActive = "border-r border-b border-[#e0a040] p-0 text-center font-['Noto_Sans',sans-serif] text-[9px] font-normal text-[#44546c] bg-linear-to-b from-[#fbd490] to-[#f8bd58]";
  const headLast = "border-b border-[#a9bbd3] p-0 pl-3 text-center font-['Noto_Sans',sans-serif] text-[9px] font-normal text-[#44546c] bg-linear-to-b from-[#eaf0f8] to-[#d3deec]";
  document.getElementById('letters').innerHTML =
    '<th class="border-b border-[#8aa9d3] bg-linear-135 from-[#a9c4e9] from-60% to-[#e4edf8] to-60% p-0"></th>' +
    letters.map(l => `<th scope="col" class="${l === 'K' ? headActive : l === 'T' ? headLast : head}">${l}</th>`).join('');

  const rowHead = "border-r border-b border-[#a9c0de] bg-[#e0eafa] p-0 text-center font-['Noto_Sans',sans-serif] text-[9px] font-normal text-[#44546c]";
  const rowHeadActive = "border-r border-b border-[#e0a040] bg-[#fbc770] p-0 text-center font-['Noto_Sans',sans-serif] text-[9px] font-normal text-[#44546c]";
  const style = {
    house: 'bg-[#ecebe0] p-0 text-center font-bold border-b border-[#333]',
    wealth: 'bg-[#ecebe0] p-0 text-center font-bold border-r border-b border-[#555]',
    dp: 'bg-[#00a2f3] p-0 text-center font-bold border-b border-[#222]',
    dpActive: 'bg-[#00a2f3] p-0 text-center font-bold border border-[#8a4a3a]',
    unknown: 'bg-[#ff1b00] p-0 text-center text-[#7c1000] border-r border-b border-[#4a0c00]',
    known: 'bg-[#ffef00] p-0 text-center whitespace-nowrap border-r border-b border-[#4a4600]',
    answer: 'bg-[#00a04c] p-0 text-center text-[#113a20] border-r border-b border-[#0a3a1a]',
    frozen: 'border-b border-[#999] p-0',
    next: 'border-b border-[#5ab4e0] p-0'
  };
  const td = (cls, text = '', span = 1) => `<td class="${cls}"${span > 1 ? ` colspan="${span}"` : ''}>${text}</td>`;
  const blank = n => td('p-0', '', n);
  const wealth = [6, 7, 1, 30, 8, 2, 4];

  function cells(r) {
    if (r === 1) return td('p-0 pl-0.5 whitespace-nowrap', 'int[ ] wealth = {6, 7, 1, 30, 8, 2, 4};', 4) +
      td('p-0 text-center text-[13px] leading-[15px] font-bold', 'Top-Down', 7) + blank(9);
    if (r === 2) return td('p-0 pl-0.5', 'Ans: 41', 4) + wealth.map((_, i) => td(style.house, 'H' + i)).join('') + blank(9);
    if (r === 3) return td('border-r border-[#555] p-0', '', 4) + wealth.map(w => td(style.wealth, w)).join('') + blank(9);
    if (r === 4) return td(style.frozen, '', 20);
    if (r === 43) return blank(4) + td(style.next, '', 7) + blank(9);
    if (r >= 8 && r % 4 === 0) return blank(4) +
      wealth.map((_, i) => td(r === 36 && i === 6 ? style.dpActive : style.dp, `DP[${i}]`)).join('') + blank(9);
    if (r >= 9 && r % 4 === 1) {
      const solved = (r - 9) / 4;
      return td('border-r border-[#333] p-0', '', 4) + wealth.map((_, i) => {
        if (r === 41 && i === 6) return td(style.answer, 'Max(4+0,0) = 4');
        if (i >= solved) return td(style.unknown, '?');
        const skip = r === 13 ? `DP[${i + 2}]` : `DP${i + 2}]`;
        return td(style.known, `Max(H${i}+${skip},DP[${i + 1}])`);
      }).join('') + blank(9);
    }
    return blank(20);
  }

  let html = '';
  for (let r = 1; r <= 43; r++) {
    const height = r === 1 ? 'h-[19px]' : r % 3 === 0 ? 'h-[13px]' : 'h-[14px]';
    html += `<tr class="${height}"><th scope="row" class="${r === 36 ? rowHeadActive : rowHead}">${r}</th>${cells(r)}</tr>`;
  }
  document.getElementById('rows').innerHTML = html;

  const sheets = [['Fibonacci', 57], ['Number Factor', 65], ['House Thief', 67], ['ConvertOneString', 84], ['ZeroOneKnapsack', 84],
    ['LongestCommonSubsequence', 137], ['LongestPalindromicSubsequence', 149], ['LongestPalindromicSubstring', 134], ['MinCost', 43], ['NumberOfPaths', 73]];
  document.getElementById('tabs').innerHTML = sheets.map(([name, w]) => {
    const on = name === 'House Thief';
    return `<button class="${on ? 'flex items-center bg-white font-bold whitespace-nowrap text-[#1f4590]' : 'flex items-center whitespace-nowrap'}" style="width:${w}px">` +
      `<span class="flex-1 text-center">${name}</span>` +
      `<svg class="h-full w-[10px]" viewBox="0 0 10 12">${on ? '<path d="M0 12L10 0v12z" fill="#cbdff7"/>' : ''}<path d="M2 12L9 0" stroke="#8da8cc" stroke-width=".8"/></svg></button>`;
  }).join('');
</script>
</body>
</html>
